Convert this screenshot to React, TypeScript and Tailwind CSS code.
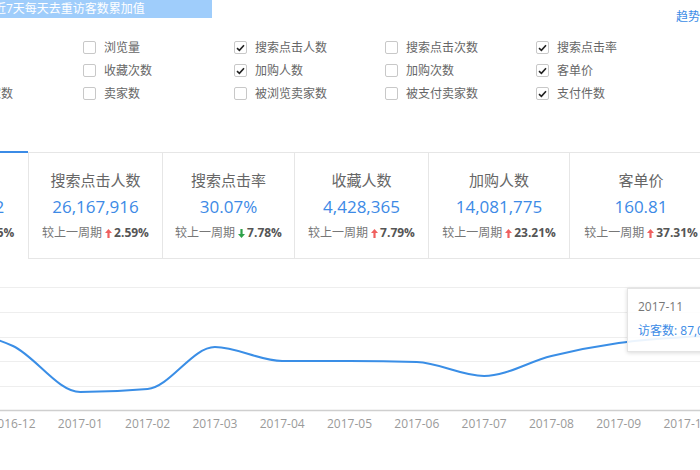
const metrics = [
  ['', '', '支付买家数'],
  ['浏览量', '收藏次数', '卖家数'],
  ['搜索点击人数', '加购人数', '被浏览卖家数'],
  ['搜索点击次数', '加购次数', '被支付卖家数'],
  ['搜索点击率', '客单价', '支付件数'],
]
const checked = new Set(['搜索点击人数', '加购人数', '搜索点击率', '客单价', '支付件数'])

const cards = [
  { title: '访客数', value: '87,065,432', diff: '3.25%', up: true, w: 'w-[134px]' },
  { title: '搜索点击人数', value: '26,167,916', diff: '2.59%', up: true, w: 'w-[134px]' },
  { title: '搜索点击率', value: '30.07%', diff: '7.78%', up: false, w: 'w-[132px]' },
  { title: '收藏人数', value: '4,428,365', diff: '7.79%', up: true, w: 'w-[134px]' },
  { title: '加购人数', value: '14,081,775', diff: '23.21%', up: true, w: 'w-[141px]' },
  { title: '客单价', value: '160.81', diff: '37.31%', up: true, w: 'w-[143px]' },
]

const months = ['2016-12', '2017-01', '2017-02', '2017-03', '2017-04', '2017-05', '2017-06', '2017-07', '2017-08', '2017-09', '2017-10', '2017-11']
const ys = [330, 347, 393, 390, 348, 362, 362, 363, 377, 357, 344, 338, 336]

function monotonePath(pts: [number, number][]) {
  const n = pts.length
  const s: number[] = []
  const h: number[] = []
  for (let i = 0; i < n - 1; i++) {
    h[i] = pts[i + 1][0] - pts[i][0]
    s[i] = (pts[i + 1][1] - pts[i][1]) / h[i]
  }
  const t: number[] = []
  for (let i = 1; i < n - 1; i++) {
    const s0 = s[i - 1]
    const s1 = s[i]
    if (s0 * s1 <= 0) {
      t[i] = 0
    } else {
      const p = (s0 * h[i] + s1 * h[i - 1]) / (h[i - 1] + h[i])
      t[i] = (Math.sign(s0) + Math.sign(s1)) * Math.min(Math.abs(s0), Math.abs(s1), 0.5 * Math.abs(p))
    }
  }
  t[0] = (3 * s[0] - t[1]) / 2
  t[n - 1] = (3 * s[n - 2] - t[n - 2]) / 2
  let d = `M${pts[0][0]},${pts[0][1]}`
  for (let i = 0; i < n - 1; i++) {
    const dx = h[i] / 3
    d += ` C${pts[i][0] + dx},${pts[i][1] + dx * t[i]} ${pts[i + 1][0] - dx},${pts[i + 1][1] - dx * t[i + 1]} ${pts[i + 1][0]},${pts[i + 1][1]}`
  }
  return d
}

function Checkbox({ on }: { on: boolean }) {
  return (
    <span className="w-[13px] h-[13px] border border-[#c8c8c8] rounded-[2px] bg-white flex items-center justify-center shrink-0">
      {on && (
        <svg width="9" height="8" viewBox="0 0 9 8">
          <path d="M1 4.2 L3.4 6.4 L8 1.2" fill="none" stroke="#222" strokeWidth="1.6" />
        </svg>
      )}
    </span>
  )
}

function Arrow({ up }: { up: boolean }) {
  const color = up ? '#f0605f' : '#2ea14a'
  return (
    <svg width="7" height="9" viewBox="0 0 7 9" className="inline-block mr-[2px]" style={{ transform: up ? undefined : 'rotate(180deg)' }}>
      <path d="M3.5 0 L7 4 L4.6 4 L4.6 9 L2.4 9 L2.4 4 L0 4 Z" fill={color} />
    </svg>
  )
}

export default function App() {
  const step = 67.3
  const pts: [number, number][] = ys.map((y, i) => [13 + step * (i - 1), y - 280])
  const line = monotonePath(pts)

  return (
    <div className="w-[700px] h-[470px] overflow-hidden relative bg-white text-[#666]" style={{ fontFamily: '"Open Sans", "Noto Sans CJK SC", sans-serif' }}>
      <div className="flex justify-between items-start h-[18px]">
        <div className="w-[212px] h-[18px] bg-[#9fcdfb] overflow-hidden whitespace-nowrap text-white text-[12px] leading-[18px]">
          <span className="ml-[-6px] inline-block">近7天每天去重访客数累加值</span>
        </div>
        <div className="pt-[9px] text-[12px] leading-[16px] text-[#3b8be6]">趋势</div>
      </div>

      <div className="mt-[18px] ml-[-68px] grid grid-cols-[repeat(5,151px)]">
        {[0, 1, 2].map((row) =>
          metrics.map((col, ci) => (
            <div key={`${ci}-${row}`} className="h-[23px] flex items-center gap-[8px] text-[12px] whitespace-nowrap">
              {col[row] && (
                <>
                  <Checkbox on={checked.has(col[row])} />
                  <span>{col[row]}</span>
                </>
              )}
            </div>
          ))
        )}
      </div>

      <div className="mt-[46px] flex items-start ml-[-106px]">
        {cards.map((c, i) => (
          <div
            key={c.title}
            className={
              i === 0
                ? `${c.w} shrink-0 h-[108px] border-t-2 border-[#3b8be6] bg-white flex flex-col items-center pt-[16px]`
                : `${c.w} shrink-0 h-[107px] mt-[1px] border border-r-0 border-[#e6e6e6] flex flex-col items-center pt-[16px] ${i === cards.length - 1 ? 'border-r' : ''}`
            }
          >
            <div className="text-[15px] leading-[22px] text-[#666] whitespace-nowrap">{c.title}</div>
            <div className="mt-[3px] text-[17px] leading-[26px] text-[#3d8ae6] whitespace-nowrap">{c.value}</div>
            <div className="mt-[3px] text-[12px] leading-[20px] text-[#777] whitespace-nowrap flex items-center">
              <span className="mr-[3px]">较上一周期</span>
              <Arrow up={c.up} />
              <span className="font-bold text-[#555]">{c.diff}</span>
            </div>
          </div>
        ))}
      </div>

      <div className="mt-[20px] relative">
        <svg width="700" height="180" className="block">
          {[8, 33, 58, 82, 107].map((y) => (
            <line key={y} x1="0" x2="700" y1={y + 0.5} y2={y + 0.5} stroke="#eeeeee" strokeWidth="1" />
          ))}
          <line x1="0" x2="700" y1="131.5" y2="131.5" stroke="#cfcfcf" strokeWidth="1.5" />
          <path d={line} fill="none" stroke="#3a8ee6" strokeWidth="2" />
          {months.map((m, i) => (
            <text key={m} x={13 + step * i} y="149" textAnchor="middle" fontSize="12" fill="#9a9a9a" fontFamily='"Open Sans", sans-serif'>
              {m}
            </text>
          ))}
        </svg>
        <div className="absolute left-[627px] top-[9px] w-[110px] h-[64px] bg-white/90 border border-[#e4e4e4] shadow-[0_1px_4px_rgba(0,0,0,0.15)] pl-[10px] pt-[8px] text-[12px] whitespace-nowrap">
          <div className="leading-[20px] text-[#777]">2017-11</div>
          <div className="mt-[4px] leading-[20px] text-[#3b8be6]">访客数: 87,065,432</div>
        </div>
      </div>
    </div>
  )
}
